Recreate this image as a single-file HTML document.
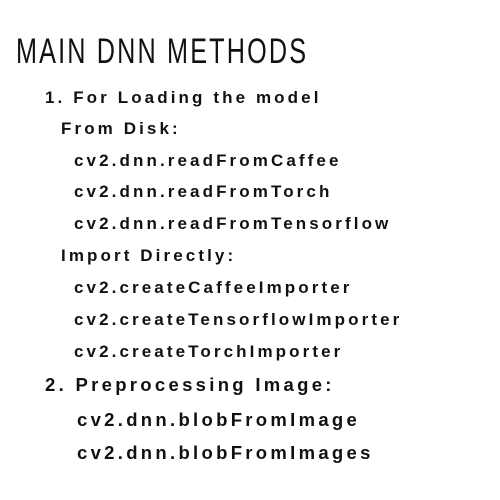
<!DOCTYPE html>
<html><head><meta charset="utf-8"><style>
body{margin:0;width:500px;height:500px;background:#fff;position:relative;overflow:hidden;font-family:"Liberation Sans",sans-serif;color:#111}
.t{position:absolute;left:16px;top:31px;font-size:35px;line-height:42px;letter-spacing:3px;transform-origin:0 0;transform:scaleX(0.72);white-space:nowrap;color:#111}
.l{position:absolute;white-space:nowrap;font-weight:bold;font-size:17px;line-height:19px;letter-spacing:3.1px}
.b{font-size:18.5px;letter-spacing:3.3px;line-height:21px}
</style></head><body>
<div class="t">MAIN DNN METHODS</div>
<div class="l" style="left:45px;top:88px">1. For Loading the model</div>
<div class="l" style="left:61px;top:119px">From Disk:</div>
<div class="l" style="left:74px;top:151px">cv2.dnn.readFromCaffee</div>
<div class="l" style="left:74px;top:182px">cv2.dnn.readFromTorch</div>
<div class="l" style="left:74px;top:214px">cv2.dnn.readFromTensorflow</div>
<div class="l" style="left:61px;top:246px">Import Directly:</div>
<div class="l" style="left:74px;top:278px">cv2.createCaffeeImporter</div>
<div class="l" style="left:74px;top:310px">cv2.createTensorflowImporter</div>
<div class="l" style="left:74px;top:342px">cv2.createTorchImporter</div>
<div class="l b" style="left:45px;top:374px">2. Preprocessing Image:</div>
<div class="l b" style="left:77px;top:409px">cv2.dnn.blobFromImage</div>
<div class="l b" style="left:77px;top:442px">cv2.dnn.blobFromImages</div>
</body></html>
